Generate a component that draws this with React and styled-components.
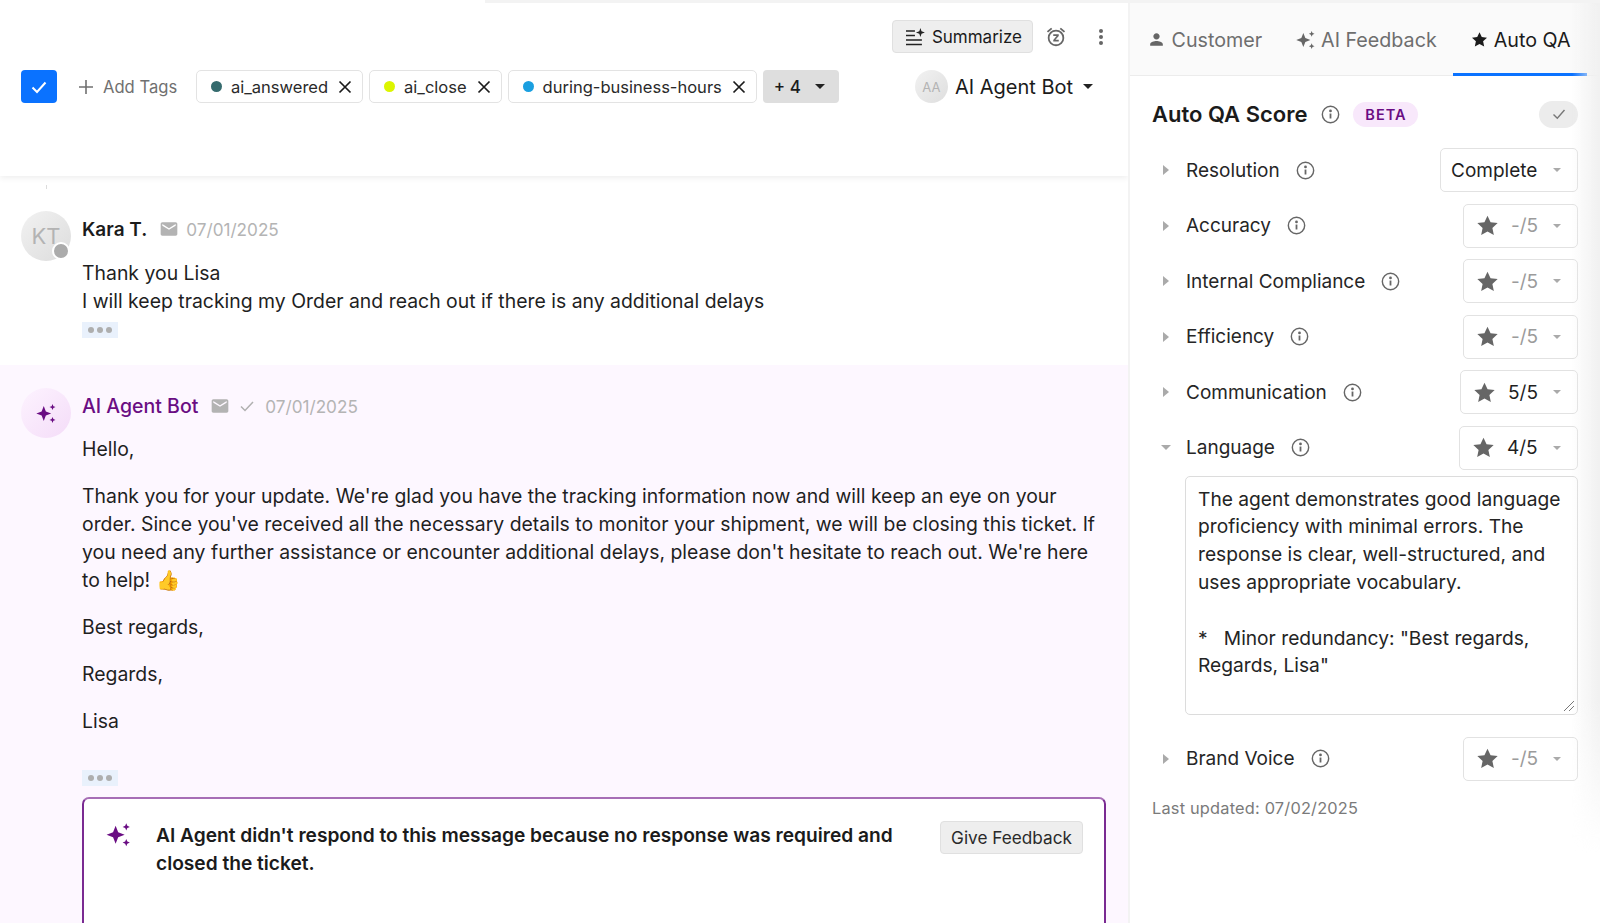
import React from 'react';
import styled, { createGlobalStyle } from 'styled-components';
import { MdEmail, MdPerson, MdOutlineSnooze } from 'react-icons/md';

const GlobalStyle = createGlobalStyle`
  html, body {
    margin: 0;
    padding: 0;
    height: 100%;
    overflow: hidden;
    background: #fff;
  }
  * { box-sizing: border-box; }
  body {
    font-family: Inter, "Liberation Sans", sans-serif;
    color: #1b1b1b;
  }
`;

const Page = styled.div`
  height: 923px;
  display: flex;
  flex-direction: column;
`;

const TopStrip = styled.div`
  height: 3px;
  margin-left: 485px;
  background: #f3f3f3;
  flex-shrink: 0;
`;

const Main = styled.div`
  flex: 1;
  min-height: 0;
  display: flex;
`;

const LeftPane = styled.div`
  width: 1128px;
  display: flex;
  flex-direction: column;
  overflow: hidden;
`;

const Header = styled.header`
  height: 173px;
  flex-shrink: 0;
  padding: 17px 21px 0;
  box-shadow: 0 2px 6px rgba(0, 0, 0, 0.07);
  position: relative;
  z-index: 1;
`;

const ActionRow = styled.div`
  display: flex;
  align-items: center;
  justify-content: flex-end;
  height: 33px;
  padding-right: 3px;
`;

const SummarizeButton = styled.button`
  display: flex;
  align-items: center;
  gap: 6px;
  height: 33px;
  width: 141px;
  padding: 0 10px 0 13px;
  background: #eeeeee;
  border: 1px solid #e0e0e0;
  border-radius: 4px;
  font: 400 17px Inter, sans-serif;
  color: #1b1b1b;
`;

const SnoozeIcon = styled(MdOutlineSnooze)`
  margin-left: 12px;
  font-size: 22px;
  color: #666;
`;

const Kebab = styled.svg`
  margin-left: 31px;
  width: 6px;
  height: 18px;
  fill: #666;
`;

const TagRow = styled.div`
  display: flex;
  align-items: center;
  margin-top: 17px;
  height: 33px;
`;

const CheckBox = styled.div`
  width: 36px;
  height: 33px;
  border-radius: 4px;
  background: #0a72ff;
  display: flex;
  align-items: center;
  justify-content: center;
  margin-right: 22px;
`;

const AddTags = styled.div`
  display: flex;
  align-items: center;
  gap: 10px;
  width: 117px;
  font-size: 16.6px;
  color: #707070;
`;

const Tag = styled.div`
  display: flex;
  align-items: center;
  height: 33px;
  padding: 0 10px 0 14px;
  margin-right: 6px;
  border: 1px solid #e3e3e3;
  border-radius: 5px;
  font-size: 16.52px;
  color: #2a2a2a;
`;

const TagDot = styled.span`
  width: 11px;
  height: 11px;
  border-radius: 50%;
  background: ${(props) => props.$color};
  margin-right: 9px;
`;

const TagClose = styled.svg`
  width: 14px;
  height: 14px;
  margin-left: 10px;
  stroke: #1b1b1b;
  stroke-width: 1.7;
  fill: none;
`;

const MoreTags = styled.div`
  display: flex;
  align-items: center;
  gap: 14px;
  height: 33px;
  width: 76px;
  padding-left: 11px;
  background: #dedede;
  border-radius: 4px;
  font: 500 17px Inter, sans-serif;
`;

const Caret = styled.span`
  width: 0;
  height: 0;
  border-left: ${(props) => props.$size || 5}px solid transparent;
  border-right: ${(props) => props.$size || 5}px solid transparent;
  border-top: ${(props) => props.$size || 5}px solid ${(props) => props.$color || '#222'};
`;

const Assignee = styled.div`
  margin-left: auto;
  margin-right: 14px;
  display: flex;
  align-items: center;
  font-size: 20px;
`;

const AssigneeAvatar = styled.div`
  width: 33px;
  height: 33px;
  border-radius: 50%;
  background: linear-gradient(135deg, #f2f2f2, #dedede);
  display: flex;
  align-items: center;
  justify-content: center;
  font-size: 13px;
  color: #b3b3b3;
  margin-right: 7px;
`;

const AssigneeName = styled.span`
  margin-right: 10px;
`;

const Thread = styled.div`
  position: relative;
  flex: 1;
  min-height: 0;
  display: flex;
  flex-direction: column;
`;

const ThreadTick = styled.span`
  position: absolute;
  left: 46px;
  top: 9px;
  width: 1px;
  height: 4px;
  background: #dcdcdc;
`;

const Message = styled.article`
  display: flex;
  padding: ${(props) => props.$padding};
  background: ${(props) => props.$bg || '#fff'};
  ${(props) => props.$grow && 'flex: 1;'}
`;

const Avatar = styled.div`
  position: relative;
  width: 50px;
  height: 50px;
  border-radius: 50%;
  flex-shrink: 0;
  margin-right: 11px;
  display: flex;
  align-items: center;
  justify-content: center;
  background: ${(props) => props.$bg};
  font-size: 22px;
  color: #b3b3b3;
`;

const StatusDot = styled.span`
  position: absolute;
  right: 1px;
  bottom: 1px;
  width: 18px;
  height: 18px;
  border-radius: 50%;
  background: #ababab;
  border: 2px solid #fff;
`;

const MessageBody = styled.div`
  flex: 1;
  min-width: 0;
`;

const MetaRow = styled.div`
  display: flex;
  align-items: center;
  height: 28px;
  margin-top: 4px;
`;

const Author = styled.span`
  font-size: ${(props) => props.$size || 19}px;
  font-weight: ${(props) => props.$weight || 600};
  color: ${(props) => props.$color || '#1b1b1b'};
`;

const MetaMail = styled(MdEmail)`
  font-size: 20px;
  color: #b3b3b3;
  margin-left: 12px;
`;

const MetaCheck = styled.svg`
  width: 14px;
  height: 14px;
  margin-left: 10px;
  stroke: #b0b0b0;
  stroke-width: 1.5;
  fill: none;
`;

const MetaDate = styled.span`
  font-size: 17.15px;
  color: #b4b4b4;
  margin-left: ${(props) => props.$gap || 7}px;
`;

const Text = styled.p`
  margin: ${(props) => props.$margin || '0'};
  font-size: 19.42px;
  line-height: 28px;
  color: #1f1f1f;
`;

const MoreDots = styled.div`
  width: 36px;
  height: 16px;
  background: #e9f1fc;
  margin: ${(props) => props.$margin};
  display: flex;
  align-items: center;
  justify-content: center;
  gap: 3px;
`;

const MoreDot = styled.span`
  width: 6px;
  height: 6px;
  border-radius: 50%;
  background: #aeaeae;
`;

const FeedbackCard = styled.div`
  display: flex;
  height: 160px;
  margin-top: 11px;
  padding: 22px 21px 0;
  background: #fff;
  border: 2px solid #7a2a92;
  border-top-color: #a76eb6;
  border-bottom: none;
  border-radius: 7px 7px 0 0;
`;

const FeedbackIcon = styled.svg`
  width: 25.5px;
  height: 25.5px;
  flex-shrink: 0;
  margin: 1px 25.5px 0 0;
  fill: #6a0d83;
`;

const AvatarSparkle = styled.svg`
  width: 21px;
  height: 21px;
  margin-left: -2px;
  fill: #6a0d83;
`;

const TabSparkle = styled.svg`
  width: 20px;
  height: 20px;
  fill: #666;
`;

const FeedbackText = styled.div`
  flex: 1;
  font-size: 19.15px;
  font-weight: 600;
  line-height: 28px;
  color: #1b1b1b;
`;

const FeedbackButton = styled.button`
  align-self: flex-start;
  margin-left: 30px;
  height: 33px;
  width: 143px;
  flex-shrink: 0;
  background: #eeeeee;
  border: 1px solid #e0e0e0;
  border-radius: 4px;
  font: 400 17.2px Inter, sans-serif;
  color: #2a2a2a;
`;

const Divider = styled.div`
  width: 2px;
  background: #f3f3f3;
  flex-shrink: 0;
`;

const RightPane = styled.aside`
  position: relative;
  flex: 1;
  min-width: 0;
  display: flex;
  flex-direction: column;
  background: #f3f3f3;

  &::after {
    content: '';
    position: absolute;
    top: 0;
    right: 0;
    bottom: 70px;
    width: 28px;
    pointer-events: none;
    background: linear-gradient(90deg, rgba(240, 240, 240, 0), rgba(240, 240, 240, 1));
    mask-image: linear-gradient(180deg, #000 82%, transparent);
  }
`;

const TabBar = styled.nav`
  display: flex;
  height: 73px;
  flex-shrink: 0;
  background: #fafafa;
  border-bottom: 1px solid #ececec;
  border-top-right-radius: 10px;
`;

const Tab = styled.div`
  display: flex;
  align-items: center;
  gap: 6px;
  white-space: nowrap;
  padding: 3px ${(props) => props.$right || 18}px 0 ${(props) => props.$left || 18}px;
  margin-bottom: -1px;
  font-size: 19.7px;
  color: ${(props) => (props.$active ? '#1b1b1b' : '#6e6e6e')};
  border-bottom: 3px solid ${(props) => (props.$active ? '#0a72ff' : 'transparent')};
`;

const TabPerson = styled(MdPerson)`
  font-size: 19px;
  color: #666;
`;

const ScorePanel = styled.div`
  flex: 1;
  background: #fff;
  padding: 24px 22px 0;
`;

const TitleRow = styled.div`
  display: flex;
  align-items: center;
  height: 28px;
  margin-bottom: 20px;
`;

const Title = styled.h2`
  margin: 0 14px 0 0;
  font-size: 22px;
  font-weight: 600;
  color: #1b1b1b;
`;

const InfoSvg = styled.svg`
  width: 19px;
  height: 19px;
  flex-shrink: 0;
  stroke: #666;
  fill: none;
  stroke-width: 1.5;
`;

const BetaPill = styled.span`
  margin-left: 13px;
  width: 65px;
  height: 25px;
  display: flex;
  align-items: center;
  justify-content: center;
  border-radius: 13px;
  background: #f8e8fb;
  color: #6a0d83;
  font-size: 14.5px;
  font-weight: 600;
  letter-spacing: 1px;
`;

const DonePill = styled.span`
  margin-left: auto;
  width: 39px;
  height: 27px;
  border-radius: 14px;
  background: #ececec;
  display: flex;
  align-items: center;
  justify-content: center;
`;

const ScoreRow = styled.div`
  display: flex;
  align-items: center;
  height: 44px;
  margin-bottom: ${(props) => props.$mb ?? 11.6}px;
`;

const ExpandCaret = styled.span`
  width: 0;
  height: 0;
  margin-left: 11px;
  margin-right: 17px;
  border-top: 5px solid transparent;
  border-bottom: 5px solid transparent;
  border-left: 6px solid #aaa;
`;

const OpenCaret = styled.span`
  width: 0;
  height: 0;
  margin-left: 9px;
  margin-right: 15px;
  border-left: 5px solid transparent;
  border-right: 5px solid transparent;
  border-top: 5px solid #aaa;
`;

const ScoreLabel = styled.span`
  font-size: 19px;
  color: #262626;
  margin-right: 16px;
`;

const ScoreSelect = styled.div`
  margin-left: auto;
  height: 44px;
  width: ${(props) => props.$width}px;
  display: flex;
  align-items: center;
  padding-left: ${(props) => props.$left || 13}px;
  border: 1px solid #e2e2e2;
  border-radius: 5px;
  position: relative;
`;

const SelectText = styled.span`
  font-size: 19px;
  margin-left: ${(props) => props.$gap || 0}px;
  color: ${(props) => (props.$empty ? '#9b9b9b' : '#1f1f1f')};
`;

const SelectCaret = styled(Caret)`
  position: absolute;
  right: 16px;
  top: 19px;
`;

const Star = styled.svg`
  width: 23px;
  height: 23px;
  margin-left: -1px;
  fill: #666;
`;

const Comment = styled.div`
  position: relative;
  margin: -6px 0 22px 33px;
  height: 239px;
  padding: 9px 12px;
  border: 1px solid #dcdcdc;
  border-radius: 5px;
  font-size: 19.2px;
  line-height: 27.8px;
  color: #242424;
  white-space: pre-wrap;
`;

const ResizeGrip = styled.svg`
  position: absolute;
  right: 2px;
  bottom: 2px;
  width: 12px;
  height: 12px;
  stroke: #777;
  stroke-width: 1;
`;

const LastUpdated = styled.div`
  margin-top: 17px;
  font-size: 16.35px;
  color: #7a7a7a;
  letter-spacing: 0.2px;
`;

const Sparkles = ({ as: Comp = 'svg', ...rest }) => (
  <Comp viewBox="0 0 24 24" {...rest}>
    <path d="M10 3.5 L12.4 9.6 L18.5 12 L12.4 14.4 L10 20.5 L7.6 14.4 L1.5 12 L7.6 9.6 Z" />
    <path d="M20 1.2 L21 3.6 L23.4 4.6 L21 5.6 L20 8 L19 5.6 L16.6 4.6 L19 3.6 Z" />
    <path d="M20 16 L21 18.4 L23.4 19.4 L21 20.4 L20 22.8 L19 20.4 L16.6 19.4 L19 18.4 Z" />
  </Comp>
);

const InfoIcon = () => (
  <InfoSvg viewBox="0 0 20 20">
    <circle cx="10" cy="10" r="8.6" />
    <path d="M10 9v5.2" strokeWidth="1.9" />
    <circle cx="10" cy="6.2" r="0.7" fill="#666" />
  </InfoSvg>
);

const StarIcon = () => (
  <Star viewBox="0 0 24 24">
    <path d="M12 1.8 L15.2 8.6 L22.6 9.5 L17.1 14.6 L18.6 22 L12 18.3 L5.4 22 L6.9 14.6 L1.4 9.5 L8.8 8.6 Z" strokeLinejoin="round" />
  </Star>
);

const CloseIcon = () => (
  <TagClose viewBox="0 0 14 14">
    <path d="M1.5 1.5 L12.5 12.5 M12.5 1.5 L1.5 12.5" />
  </TagClose>
);

const Ellipsis = ({ margin }) => (
  <MoreDots $margin={margin}>
    <MoreDot />
    <MoreDot />
    <MoreDot />
  </MoreDots>
);

const tags = [
  { name: 'ai_answered', color: '#356b6e' },
  { name: 'ai_close', color: '#dcf500' },
  { name: 'during-business-hours', color: '#1a9fe0' },
];

const rowsBefore = [
  { label: 'Accuracy', value: '-/5', empty: true, width: 115 },
  { label: 'Internal Compliance', value: '-/5', empty: true, width: 115 },
  { label: 'Efficiency', value: '-/5', empty: true, width: 115 },
  { label: 'Communication', value: '5/5', width: 118 },
];

const commentText = `The agent demonstrates good language proficiency with minimal errors. The response is clear, well-structured, and uses appropriate vocabulary.

*   Minor redundancy: "Best regards, Regards, Lisa"`;

const RatingSelect = ({ value, empty, width }) => (
  <ScoreSelect $width={width}>
    <StarIcon />
    <SelectText $gap={12} $empty={empty}>{value}</SelectText>
    <SelectCaret $size={4} $color="#aaa" />
  </ScoreSelect>
);

const App = () => {
  return (
    <Page>
      <GlobalStyle />
      <TopStrip />
      <Main>
        <LeftPane>
          <Header>
            <ActionRow>
              <SummarizeButton>
                <svg width="20" height="18" viewBox="0 0 20 18" fill="none" stroke="#222" strokeWidth="1.6">
                  <path d="M0 3h9M0 7.5h9M0 12h16M0 16.5h16" />
                  <path d="M14.5 0 L15.6 3.2 L19 4.5 L15.6 5.8 L14.5 9 L13.4 5.8 L10 4.5 L13.4 3.2 Z" fill="#222" stroke="none" />
                </svg>
                Summarize
              </SummarizeButton>
              <SnoozeIcon />
              <Kebab viewBox="0 0 6 18">
                <circle cx="3" cy="3" r="2" />
                <circle cx="3" cy="9" r="2" />
                <circle cx="3" cy="15" r="2" />
              </Kebab>
            </ActionRow>
            <TagRow>
              <CheckBox>
                <svg width="18" height="18" viewBox="0 0 18 18" fill="none" stroke="#fff" strokeWidth="2">
                  <path d="M2.5 9.5 L7 14 L15.5 4.5" />
                </svg>
              </CheckBox>
              <AddTags>
                <svg width="14" height="14" viewBox="0 0 14 14" stroke="#707070" strokeWidth="1.6">
                  <path d="M7 0v14M0 7h14" />
                </svg>
                Add Tags
              </AddTags>
              {tags.map((tag) => (
                <Tag key={tag.name}>
                  <TagDot $color={tag.color} />
                  {tag.name}
                  <CloseIcon />
                </Tag>
              ))}
              <MoreTags>
                + 4
                <Caret />
              </MoreTags>
              <Assignee>
                <AssigneeAvatar>AA</AssigneeAvatar>
                <AssigneeName>AI Agent Bot</AssigneeName>
                <Caret />
              </Assignee>
            </TagRow>
          </Header>
          <Thread>
            <ThreadTick />
            <Message $padding="35px 0 27px 21px">
              <Avatar $bg="linear-gradient(135deg, #f2f2f2, #dcdcdc)">
                KT
                <StatusDot />
              </Avatar>
              <MessageBody>
                <MetaRow>
                  <Author>Kara T.</Author>
                  <MetaMail />
                  <MetaDate>07/01/2025</MetaDate>
                </MetaRow>
                <Text $margin="16px 0 0">
                  Thank you Lisa
                  <br />
                  I will keep tracking my Order and reach out if there is any additional delays
                </Text>
                <Ellipsis margin="7px 0 0" />
              </MessageBody>
            </Message>
            <Message $bg="#fdf7ff" $grow $padding="23px 22px 0 21px">
              <Avatar $bg="linear-gradient(135deg, #fdf3ff, #f4dcf8)">
                <Sparkles as={AvatarSparkle} />
              </Avatar>
              <MessageBody>
                <MetaRow>
                  <Author $weight={500} $size={19.5} $color="#6a0d83">AI Agent Bot</Author>
                  <MetaMail />
                  <MetaCheck viewBox="0 0 14 14">
                    <path d="M1 7.5 L5 11.5 L13 3" />
                  </MetaCheck>
                  <MetaDate $gap={11}>07/01/2025</MetaDate>
                </MetaRow>
                <Text $margin="15px 0 0">Hello,</Text>
                <Text $margin="19px 0 0">
                  Thank you for your update. We're glad you have the tracking information now and will keep an eye on your order. Since you've received all the necessary details to monitor your shipment, we will be closing this ticket. If you need any further assistance or encounter additional delays, please don't hesitate to reach out. We're here to help! 👍
                </Text>
                <Text $margin="19px 0 0">Best regards,</Text>
                <Text $margin="19px 0 0">Regards,</Text>
                <Text $margin="19px 0 0">Lisa</Text>
                <Ellipsis margin="35px 0 0" />
                <FeedbackCard>
                  <Sparkles as={FeedbackIcon} />
                  <FeedbackText>
                    AI Agent didn't respond to this message because no response was required and closed the ticket.
                  </FeedbackText>
                  <FeedbackButton>Give Feedback</FeedbackButton>
                </FeedbackCard>
              </MessageBody>
            </Message>
          </Thread>
        </LeftPane>
        <Divider />
        <RightPane>
          <TabBar>
            <Tab $left={16.5}>
              <TabPerson />
              Customer
            </Tab>
            <Tab $left={15} $right={16}>
              <Sparkles as={TabSparkle} />
              AI Feedback
            </Tab>
            <Tab $active $right={16}>
              <svg width="17" height="17" viewBox="0 0 24 24" fill="#1b1b1b">
                <path d="M12 1.8 L15.2 8.6 L22.6 9.5 L17.1 14.6 L18.6 22 L12 18.3 L5.4 22 L6.9 14.6 L1.4 9.5 L8.8 8.6 Z" />
              </svg>
              Auto QA
            </Tab>
          </TabBar>
          <ScorePanel>
            <TitleRow>
              <Title>Auto QA Score</Title>
              <InfoIcon />
              <BetaPill>BETA</BetaPill>
              <DonePill>
                <svg width="14" height="14" viewBox="0 0 14 14" fill="none" stroke="#777" strokeWidth="1.4">
                  <path d="M1.5 7.5 L5.3 11.2 L12.5 3" />
                </svg>
              </DonePill>
            </TitleRow>
            <ScoreRow>
              <ExpandCaret />
              <ScoreLabel>Resolution</ScoreLabel>
              <InfoIcon />
              <ScoreSelect $width={138} $left={10}>
                <SelectText>Complete</SelectText>
                <SelectCaret $size={4} $color="#aaa" />
              </ScoreSelect>
            </ScoreRow>
            {rowsBefore.map((row) => (
              <ScoreRow key={row.label}>
                <ExpandCaret />
                <ScoreLabel>{row.label}</ScoreLabel>
                <InfoIcon />
                <RatingSelect value={row.value} empty={row.empty} width={row.width} />
              </ScoreRow>
            ))}
            <ScoreRow>
              <OpenCaret />
              <ScoreLabel>Language</ScoreLabel>
              <InfoIcon />
              <RatingSelect value="4/5" width={119} />
            </ScoreRow>
            <Comment>
              {commentText}
              <ResizeGrip viewBox="0 0 12 12">
                <path d="M1 11 L11 1 M6 11 L11 6" />
              </ResizeGrip>
            </Comment>
            <ScoreRow $mb={0}>
              <ExpandCaret />
              <ScoreLabel>Brand Voice</ScoreLabel>
              <InfoIcon />
              <RatingSelect value="-/5" empty width={115} />
            </ScoreRow>
            <LastUpdated>Last updated: 07/02/2025</LastUpdated>
          </ScorePanel>
        </RightPane>
      </Main>
    </Page>
  );
};

export default App;
